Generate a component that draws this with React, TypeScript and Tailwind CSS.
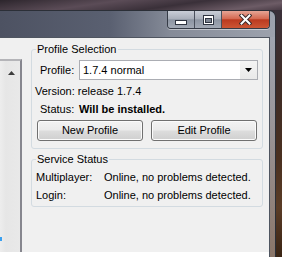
function CaptionButtons() {
  return (
    <div className="flex h-[18px] rounded-b-[4px] border border-t-0 border-[#353b46] overflow-hidden shadow-[0_1px_0_rgba(255,255,255,0.45)]">
      <div className="w-[27px] flex items-end justify-center pb-[3px] border-r border-[#4a505c] bg-[linear-gradient(180deg,#c9ced7_0%,#aab0bb_45%,#8d95a2_52%,#a2a9b5_100%)]">
        <svg width="12" height="5" viewBox="0 0 12 5">
          <rect x="0.5" y="0.5" width="11" height="4" fill="#fff" stroke="#2e3440" />
        </svg>
      </div>
      <div className="w-[27px] flex items-center justify-center border-r border-[#4a505c] bg-[linear-gradient(180deg,#c9ced7_0%,#aab0bb_45%,#8d95a2_52%,#a2a9b5_100%)]">
        <svg width="11" height="10" viewBox="0 0 11 10">
          <rect x="0.5" y="0.5" width="10" height="9" fill="#fff" stroke="#2e3440" />
          <rect x="2.5" y="3.5" width="6" height="4" fill="#7d8592" stroke="#2e3440" />
        </svg>
      </div>
      <div className="w-[47px] flex items-center justify-center bg-[linear-gradient(180deg,#e6a595_0%,#d46a52_45%,#bb3a20_52%,#cc5634_100%)]">
        <svg width="13" height="11" viewBox="0 0 13 11">
          <path d="M2.5 1.5 L10.5 9.5 M10.5 1.5 L2.5 9.5" stroke="#3b2a2a" strokeWidth="4" strokeLinecap="square" />
          <path d="M2.5 1.5 L10.5 9.5 M10.5 1.5 L2.5 9.5" stroke="#ffffff" strokeWidth="2" strokeLinecap="square" />
        </svg>
      </div>
    </div>
  )
}

function WinButton({ label }: { label: string }) {
  return (
    <div className="w-[106px] h-[21px] flex items-center justify-center rounded-[3px] border border-[#707070] shadow-[inset_0_0_0_1px_#fbfbfb] bg-[linear-gradient(180deg,#f3f3f3_0%,#ebebeb_48%,#dddddd_52%,#cfcfcf_100%)]">
      {label}
    </div>
  )
}

export default function App() {
  return (
    <div className="w-[282px] h-[257px] overflow-hidden flex flex-col bg-[#3b3039] font-['Liberation_Sans',Arial,sans-serif] text-[11px] text-[#000000]">
      {/* desktop above the window */}
      <div className="h-[10px] shrink-0 bg-[linear-gradient(172deg,#2c252c_0%,#5b4c57_35%,#3a3039_60%,#6d5c66_85%,#4a3c46_100%)]" />

      <div className="flex flex-1">
        {/* window */}
        <div className="w-[276px] flex flex-col rounded-tr-[7px] border-t border-r border-[#2b2f37] bg-[linear-gradient(90deg,#4d5262_0%,#5a6071_40%,#858b98_62%,#9da2ad_100%)]">
          <div className="h-[26px] shrink-0 flex justify-end items-start pr-[5px]">
            <CaptionButtons />
          </div>

          <div className="flex flex-1">
            <div className="w-[270px] flex flex-col border-t border-r border-[#4f5560]">
              <div className="flex flex-1 bg-[#f0f0f0]">
                {/* list on the left */}
                <div className="w-[22px] mt-[21px] flex flex-col border-t-2 border-r-2 border-t-[#b4b4b8] border-r-[#86868e] bg-[linear-gradient(90deg,#ededed_0%,#e6e6e6_30%,#e9e9e9_100%)]">
                  <div className="h-[24px] flex items-center justify-center pl-[3px]">
                    <svg width="7" height="4" viewBox="0 0 7 4">
                      <path d="M3.5 0 L7 4 L0 4 Z" fill="#3c3c3c" />
                    </svg>
                  </div>
                  <div className="flex-1" />
                  <div className="w-[2px] h-[4px] bg-[#3aa0f0]" />
                  <div className="h-[11px]" />
                </div>

                {/* right panel */}
                <div className="ml-[9px] w-[232px] flex flex-col">
                  <fieldset className="mt-[5px] pt-[4px] pb-[7px] border border-[#d3dbe1] rounded-[3px]">
                    <legend className="ml-[4px] px-[1px] leading-[13px]">Profile Selection</legend>
                    <div className="flex items-center h-[20px] pl-[8px] pr-[4px]">
                      <span className="w-[39px]">Profile:</span>
                      <div className="w-[179px] h-[20px] flex border border-[#abadb3] bg-white">
                        <span className="flex-1 pl-[3px] leading-[18px]">1.7.4 normal</span>
                        <span className="w-[17px] flex items-center justify-center bg-[linear-gradient(180deg,#f4f4f4_0%,#e9e9e9_100%)]">
                          <svg width="7" height="4" viewBox="0 0 7 4">
                            <path d="M0 0 L7 0 L3.5 4 Z" fill="#000" />
                          </svg>
                        </span>
                      </div>
                    </div>
                    <div className="mt-[2px] h-[18px] leading-[18px] pl-[3px]">Version: release 1.7.4</div>
                    <div className="h-[18px] leading-[18px] pl-[8px] flex">
                      <span className="w-[39px]">Status:</span>
                      <span className="font-bold">Will be installed.</span>
                    </div>
                    <div className="mt-[2px] flex gap-[8px] pl-[5px]">
                      <WinButton label="New Profile" />
                      <WinButton label="Edit Profile" />
                    </div>
                  </fieldset>

                  <fieldset className="mt-[4px] pt-[2px] pb-[2px] border border-[#d3dbe1] rounded-[3px]">
                    <legend className="ml-[4px] px-[1px] leading-[13px]">Service Status</legend>
                    <div className="h-[18px] leading-[18px] pl-[4px] flex">
                      <span className="w-[68px]">Multiplayer:</span>
                      <span>Online, no problems detected.</span>
                    </div>
                    <div className="h-[18px] leading-[18px] pl-[4px] flex">
                      <span className="w-[68px]">Login:</span>
                      <span>Online, no problems detected.</span>
                    </div>
                  </fieldset>
                </div>
              </div>
              <div className="h-[5px] shrink-0 bg-white" />
            </div>
            {/* right frame edge */}
            <div className="flex-1 bg-[linear-gradient(180deg,#a0a5b0_0%,#9a9598_40%,#8a7568_100%)]" />
          </div>
        </div>

        {/* desktop to the right */}
        <div className="flex-1 bg-[linear-gradient(180deg,#3a3039_0%,#3e2c26_30%,#4a3020_60%,#5a3c26_80%,#3a2414_100%)]" />
      </div>
    </div>
  )
}
